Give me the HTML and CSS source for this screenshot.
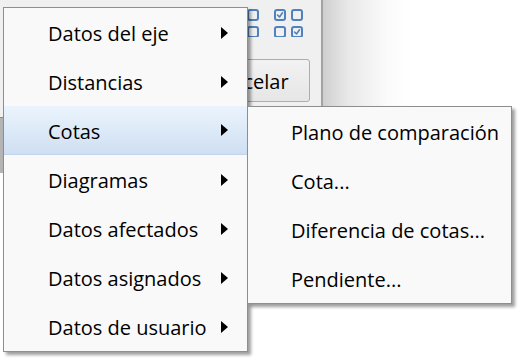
FILE: index.html
```html
<!DOCTYPE html>
<html lang="es">
<head>
<meta charset="utf-8">
<link rel="stylesheet" href="styles.css">
</head>
<body>
<div class="screen">
  <div class="backdrop">
    <div class="dialog">
      <div class="icons">
        <svg class="grid" width="29" height="28" viewBox="0 0 29 28">
          <rect x="1" y="1" width="10" height="10" rx="2"/>
          <rect x="18" y="1" width="10" height="10" rx="2"/>
          <rect x="1" y="18" width="10" height="10" rx="2"/>
          <rect x="18" y="18" width="10" height="10" rx="2"/>
        </svg>
        <svg class="grid" width="29" height="28" viewBox="0 0 29 28">
          <rect x="1" y="1" width="10" height="10" rx="2"/>
          <path class="check" d="M3.5 6 L5.5 8 L8.5 3.8"/>
          <rect x="18" y="1" width="10" height="10" rx="2"/>
          <rect x="1" y="18" width="10" height="10" rx="2"/>
          <rect x="18" y="18" width="10" height="10" rx="2"/>
          <path class="check" d="M20.5 23 L22.5 25 L25.5 20.8"/>
        </svg>
      </div>
      <div class="buttons">
        <div class="button">Cancelar</div>
      </div>
    </div>
    <div class="fade"></div>
  </div>
  <div class="edge"></div>

  <div class="menu main">
    <div class="item"><span>Datos del eje</span><i class="arrow"></i></div>
    <div class="item"><span>Distancias</span><i class="arrow"></i></div>
    <div class="item active"><span>Cotas</span><i class="arrow"></i></div>
    <div class="item"><span>Diagramas</span><i class="arrow"></i></div>
    <div class="item"><span>Datos afectados</span><i class="arrow"></i></div>
    <div class="item"><span>Datos asignados</span><i class="arrow"></i></div>
    <div class="item"><span>Datos de usuario</span><i class="arrow"></i></div>
  </div>

  <div class="menu sub">
    <div class="item"><span>Plano de comparación</span></div>
    <div class="item"><span>Cota...</span></div>
    <div class="item"><span>Diferencia de cotas...</span></div>
    <div class="item"><span>Pendiente...</span></div>
  </div>
</div>
</body>
</html>
```
FILE: styles.css
```css
html, body {
  margin: 0;
  padding: 0;
  background: #ffffff;
}
body {
  font-family: "Open Sans", "Noto Sans", sans-serif;
  font-size: 20px;
  color: #000;
}
.screen {
  position: relative;
  width: 524px;
  height: 363px;
  overflow: hidden;
  background: #ffffff;
}
.backdrop {
  display: flex;
  height: 117px;
}
.dialog {
  width: 321px;
  flex: none;
  background: #f0f0f0;
  border-right: 2px solid #a3a3a3;
  box-sizing: content-box;
  display: flex;
  flex-direction: column;
}
.icons {
  display: flex;
  gap: 15px;
  padding: 9px 0 0 230px;
  height: 28px;
}
.grid rect {
  fill: none;
  stroke: #4f81bd;
  stroke-width: 2;
}
.grid .check {
  fill: none;
  stroke: #4f81bd;
  stroke-width: 1.6;
  stroke-linecap: round;
  stroke-linejoin: round;
}
.buttons {
  display: flex;
  justify-content: flex-end;
  padding: 22px 11px 0 0;
}
.button {
  width: 124px;
  height: 41px;
  border: 1px solid #adadad;
  border-radius: 3px;
  background: linear-gradient(#f2f2f2, #e6e6e6);
  display: flex;
  align-items: center;
  justify-content: center;
  line-height: 1;
  padding-top: 2px;
  box-sizing: border-box;
  height: 43px;
}
.fade {
  flex: 1;
  background: linear-gradient(to right, #cfcfcf 0, #e8e8e8 25px, #fbfbfb 65px, #ffffff 90px);
}
.edge {
  width: 3px;
  height: 55px;
  background: #b4b4b4;
  border-top: 1px solid #8a8a8a;
}
.menu {
  position: absolute;
  background: #f9f9f9;
  border: 1px solid #8e8e8e;
  box-shadow: 3px 3px 3px rgba(0, 0, 0, 0.38);
  display: flex;
  flex-direction: column;
}
.main {
  left: 3px;
  top: 7px;
  width: 243px;
}
.sub {
  left: 247px;
  top: 106px;
  width: 263px;
}
.item {
  height: 49px;
  display: flex;
  align-items: center;
  justify-content: space-between;
  box-sizing: border-box;
  white-space: nowrap;
}
.main .item {
  padding: 0 19px 0 44px;
}
.sub .item {
  padding: 0 0 0 43px;
}
.item span {
  position: relative;
  top: 1px;
}
.item.active {
  background: linear-gradient(#ebf4fd, #cfdff2);
  border-bottom: 1px solid #c3d5ea;
}
.arrow {
  width: 0;
  height: 0;
  border-top: 6.5px solid transparent;
  border-bottom: 6.5px solid transparent;
  border-left: 7px solid #000;
}
```
